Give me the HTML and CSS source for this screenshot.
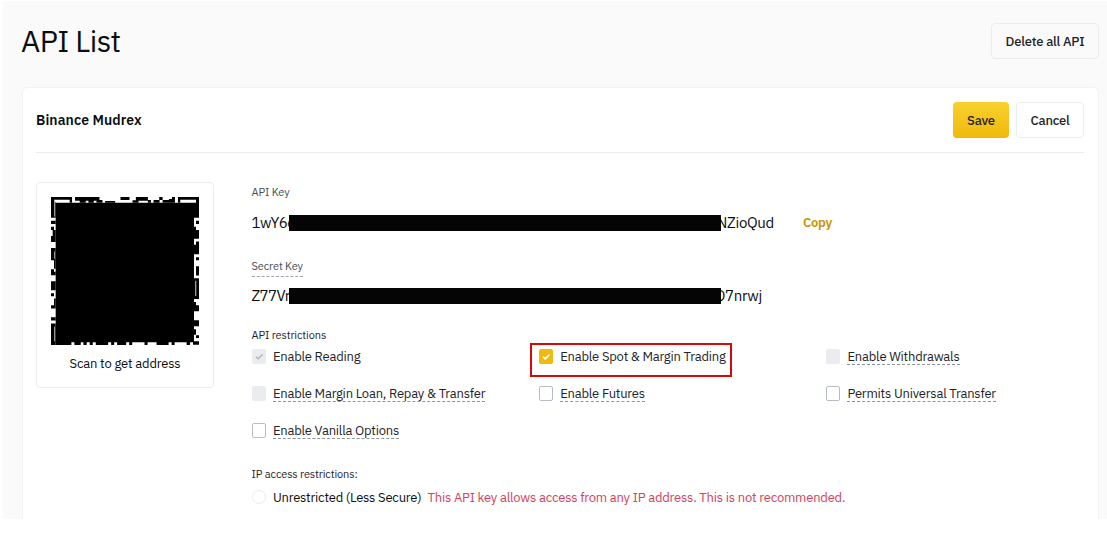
FILE: index.html
```html
<!DOCTYPE html>
<html lang="en">
<head>
<meta charset="utf-8">
<title>API List</title>
<link rel="stylesheet" href="styles.css">
</head>
<body>
<main class="page">
  <header class="page-head">
    <h1 class="title">API List</h1>
    <button class="btn delete">Delete all API</button>
  </header>
  <section class="card">
    <div class="card-head">
      <h2 class="name">Binance Mudrex</h2>
      <div class="actions">
        <button class="btn save">Save</button>
        <button class="btn cancel">Cancel</button>
      </div>
    </div>
    <div class="card-body">
      <div class="qr">
        <svg class="qr-code" viewBox="64 67 443 443">
          <path d="M78 84H492V502H78Z"/>
          <path d="M64 67h63v17h-7v-9H73v8h5v46H64ZM444 67h63v62h-15V84h6v-9h-47v9h-7ZM64 446h14v64H64Z"/>
          <path d="M136 67h73v9h9v8h-18v-6h-8v6h-16v-6h-8v6h-18v-6h-14ZM272 67h27v9h-27ZM318 67h36v9h9v8h-9v-6h-28v6h-18v-7h10ZM388 67h10v9h-10ZM371 76h18v8h-18ZM398 76h19v8h-19ZM417 73h9v-6h9v17h-18ZM226 79h30v5h-30Z"/>
          <path d="M64 138h14v10H64ZM64 156h9v10h-9ZM69 166h9v18h-9ZM64 184h14v18H64ZM64 220h14v36H64ZM73 256h5v26h-5ZM64 283h9v8h5v10H64ZM64 319h14v27H64ZM64 355h9v9h-9ZM73 371h5v25h-5ZM64 391h14v10H64ZM64 427h14v10H64Z"/>
          <path d="M498 138h9v10h-9ZM492 156h6v10h9v26h-15ZM498 200h9v10h-9ZM492 210h15v28h-15ZM498 247h9v9h-9ZM498 274h9v28h-9ZM492 310h15v62h-15ZM492 381h6v10h9v18h-15ZM492 436h15v18h-15ZM492 463h6v16h-6ZM498 481h9v8h-9ZM489 499h18v10h-18Z"/>
          <path d="M78 500h47v10H78ZM134 500h19v10h-19ZM161 500h10v10h-10ZM180 500h9v10h-9ZM198 500h37v10h-37ZM244 500h9v10h-9ZM262 500h27v10h-27ZM298 500h9v10h-9ZM344 500h9v10h-9ZM380 500h36v10h-36ZM425 500h9v10h-9ZM470 500h10v10h-10Z"/>
          <path class="qr-gap" d="M73 77h3v48h-3ZM73 230h3v22h-3ZM73 455h3v44h-3ZM495 318h4v45h-4Z"/>
        </svg>
        <span class="scan">Scan to get address</span>
      </div>
      <div class="details">
        <div class="label l-key">API Key</div>
        <div class="key">
          <span class="lead">1wY6d</span><i class="bar"></i><span class="tail t1">NZioQud</span>
          <a class="copy">Copy</a>
        </div>
        <div class="label l-secret"><span class="tip">Secret Key</span></div>
        <div class="key">
          <span class="lead">Z77Vr</span><i class="bar"></i><span class="tail t2">O7nrwj</span>
        </div>
        <div class="label l-restr">API restrictions</div>
        <div class="options">
          <div class="opt"><i class="box off"><svg viewBox="0 0 14 14"><path d="M3.3 7.2 5.8 9.6 10.8 4.6"/></svg></i><span>Enable Reading</span></div>
          <div class="opt picked"><i class="box on"><svg viewBox="0 0 14 14"><path d="M3.3 7.2 5.8 9.6 10.8 4.6"/></svg></i><span>Enable Spot &amp; Margin Trading</span></div>
          <div class="opt"><i class="box off"></i><span class="dash">Enable Withdrawals</span></div>
          <div class="opt"><i class="box off"></i><span class="dash">Enable Margin Loan, Repay &amp; Transfer</span></div>
          <div class="opt"><i class="box"></i><span class="dash">Enable Futures</span></div>
          <div class="opt"><i class="box"></i><span class="dash">Permits Universal Transfer</span></div>
          <div class="opt"><i class="box"></i><span class="dash">Enable Vanilla Options</span></div>
        </div>
        <div class="label l-ip">IP access restrictions:</div>
        <div class="ip"><i class="radio"></i><span class="unres">Unrestricted (Less Secure)</span><span class="warn">This API key allows access from any IP address. This is not recommended.</span></div>
      </div>
    </div>
  </section>
</main>
</body>
</html>
```
FILE: styles.css
```css
* { box-sizing: border-box; }
body { margin: 0; background: #fff; color: #1e2329; font-family: "IBM Plex Sans", Roboto, sans-serif; overflow: hidden; }
h1, h2 { margin: 0; }
i { font-style: normal; }
.page { margin: 1px 0 0 3px; height: 518px; padding: 22px 8px 0 19px; background: #fafafa; overflow: hidden; }
.page-head { display: flex; justify-content: space-between; height: 64px; }
.title { margin-left: -1px; font-size: 30px; line-height: 36px; font-weight: 400; color: #0b0e11; letter-spacing: -0.55px; }
.btn { height: 36px; padding: 1px 0 0; border: 1px solid #eaecef; border-radius: 4px; background: transparent; color: #1e2329; font: 500 13px/33px "IBM Plex Sans", Roboto, sans-serif; letter-spacing: -0.2px; white-space: nowrap; }
.delete { width: 108px; }
.card { height: 440px; padding: 0 14px 0 13px; background: #fff; border: 1px solid #f3f3f4; border-radius: 5px; }
.card-head { display: flex; justify-content: space-between; height: 65px; padding-top: 14px; border-bottom: 1px solid #eaecef; }
.name { font-size: 14px; line-height: 37px; font-weight: 600; letter-spacing: 0.1px; color: #0b0e11; }
.actions { display: flex; gap: 7px; }
.save { width: 56px; border: 0; background: linear-gradient(#f8d12f, #f0b90b); }
.cancel { width: 68px; }
.card-body { display: flex; padding-top: 29px; }
.qr { display: flex; flex-direction: column; align-items: center; width: 178px; height: 206px; padding-top: 14px; border: 1px solid #eaecef; border-radius: 4px; }
.qr-code { display: block; width: 148px; height: 148px; }
.qr-gap { fill: #999; }
.scan { margin-top: 11px; font-size: 13px; line-height: 16px; letter-spacing: -0.18px; color: #0b0e11; }
.details { flex: 1; padding-left: 37.5px; white-space: nowrap; }
.label { display: flex; font-size: 11px; line-height: 14px; letter-spacing: -0.12px; color: #474d57; }
.l-key { margin-top: 3px; height: 30px; }
.l-secret { margin-top: 28px; height: 29px; }
.tip { height: 18px; border-bottom: 1px dashed #9ba3ad; }
.key { display: flex; height: 16px; line-height: 15px; font-size: 15px; letter-spacing: -0.3px; color: #0b0e11; }
.lead { width: 37.5px; letter-spacing: -0.6px; }
.bar { width: 432px; background: #050505; position: relative; z-index: 1; }
.tail { display: flex; justify-content: flex-end; }
.t1 { width: 53px; }
.t2 { width: 41px; }
.copy { margin-left: 29px; font-size: 13px; line-height: 16px; font-weight: 600; letter-spacing: -0.3px; color: #c99400; }
.l-restr { margin-top: 24px; height: 14px; color: #1e2329; }
.options { display: grid; grid-template-columns: 287.3px 287.3px 1fr; grid-auto-rows: 37px; padding-top: 7px; }
.opt { display: flex; align-items: flex-start; gap: 7px; font-size: 13px; line-height: 15px; letter-spacing: -0.21px; position: relative; }
.dash { border-bottom: 1px dashed #8d949e; height: 16px; }
.box { flex: none; width: 14.4px; height: 15px; border: 1px solid #b7bdc6; border-radius: 2px; }
.box svg { display: block; width: 12.5px; height: 13px; fill: none; stroke: #b7bdc6; stroke-width: 1.8; }
.off { background: #eaecef; border-color: #eaecef; }
.on { background: #f0b90b; border-color: #f0b90b; }
.on svg { stroke: #fff; }
.picked::after { content: ""; box-sizing: border-box; position: absolute; left: -9px; top: -6px; width: 202px; height: 34px; border: 2px solid #d20a0a; }
.l-ip { margin-top: 7px; height: 23px; color: #1e2329; }
.ip { display: flex; height: 15px; font-size: 13px; line-height: 15px; letter-spacing: -0.21px; color: #0b0e11; }
.radio { width: 14.4px; height: 14.4px; margin-right: 7px; border: 1px solid #eaecef; border-radius: 50%; }
.unres { width: 154.6px; }
.warn { color: #d9405a; }
```
